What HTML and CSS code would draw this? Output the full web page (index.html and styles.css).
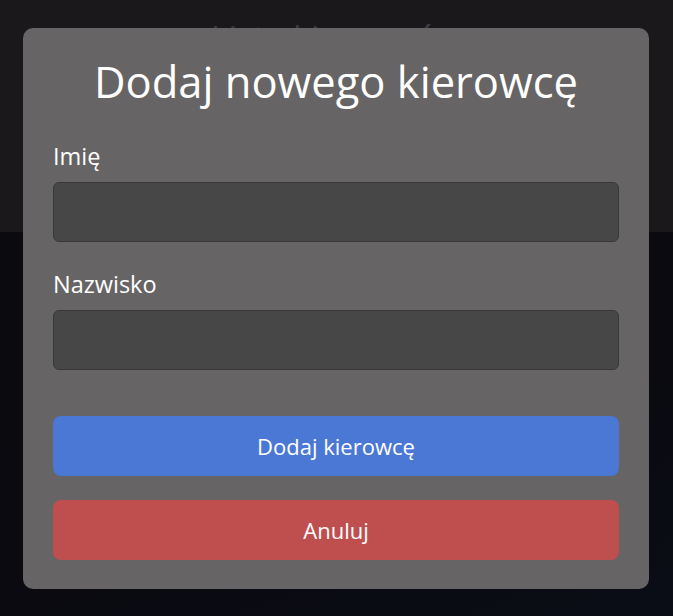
FILE: index.html
```html
<!DOCTYPE html>
<html lang="pl">
<head>
<meta charset="utf-8">
<title>Dodaj nowego kierowcę</title>
<link rel="stylesheet" href="styles.css">
</head>
<body>
<div class="page">
  <header class="page-header">
    <h1 class="page-title">Lista kierowców</h1>
  </header>
  <main class="page-main"></main>
</div>
<div class="overlay">
  <div class="modal">
    <h2 class="modal-title">Dodaj nowego kierowcę</h2>
    <div class="field">
      <label class="field-label" for="imie">Imię</label>
      <input class="field-input" id="imie" type="text">
    </div>
    <div class="field">
      <label class="field-label" for="nazwisko">Nazwisko</label>
      <input class="field-input" id="nazwisko" type="text">
    </div>
    <div class="actions">
      <button class="btn btn-primary">Dodaj kierowcę</button>
      <button class="btn btn-danger">Anuluj</button>
    </div>
  </div>
</div>
</body>
</html>
```
FILE: styles.css
```css
html, body {
  margin: 0;
  padding: 0;
  height: 100%;
}
body {
  font-family: "Open Sans", "Noto Sans", sans-serif;
  background: #0b0a0f;
  color: #fff;
  overflow: hidden;
}
.page {
  display: flex;
  flex-direction: column;
  height: 100%;
}
.page-header {
  height: 232px;
  background: #1b181b;
  display: flex;
  justify-content: center;
  padding-top: 14px;
  box-sizing: border-box;
}
.page-title {
  margin: 0;
  font-size: 34px;
  font-weight: 400;
  color: #3e3c40;
  line-height: 1.3;
  padding-top: 2px;
}
.page-main {
  flex: 1;
  background: linear-gradient(160deg, #0b0a0e 0%, #0a0a10 60%, #0a0d16 100%);
}
.overlay {
  position: fixed;
  inset: 0;
  display: flex;
  justify-content: flex-start;
  align-items: flex-start;
  padding: 28px 0 0 23px;
}
.modal {
  width: 626px;
  box-sizing: border-box;
  background: #666464;
  border-radius: 10px;
  padding: 25px 30px 29px;
  display: flex;
  flex-direction: column;
}
.modal-title {
  margin: 0 0 31px;
  font-size: 43.5px;
  font-weight: 400;
  text-align: center;
  line-height: 57px;
  color: #fff;
}
.field {
  display: flex;
  flex-direction: column;
  margin-bottom: 27px;
}
.field-label {
  font-size: 23.5px;
  line-height: 30px;
  margin-bottom: 11px;
  color: #fff;
}
.field-input {
  height: 60px;
  box-sizing: border-box;
  background: #484747;
  border: 1px solid #3a3939;
  border-radius: 6px;
  font-family: inherit;
  font-size: 20px;
  color: #fff;
  padding: 0 14px;
  outline: none;
}
.actions {
  display: flex;
  flex-direction: column;
  gap: 24px;
  margin-top: 19px;
}
.btn {
  height: 60px;
  border: none;
  border-radius: 8px;
  font-family: inherit;
  font-size: 22px;
  color: #fff;
  cursor: pointer;
}
.btn-primary {
  background: #4a78d4;
}
.btn-danger {
  background: #bf4f4f;
}
```
